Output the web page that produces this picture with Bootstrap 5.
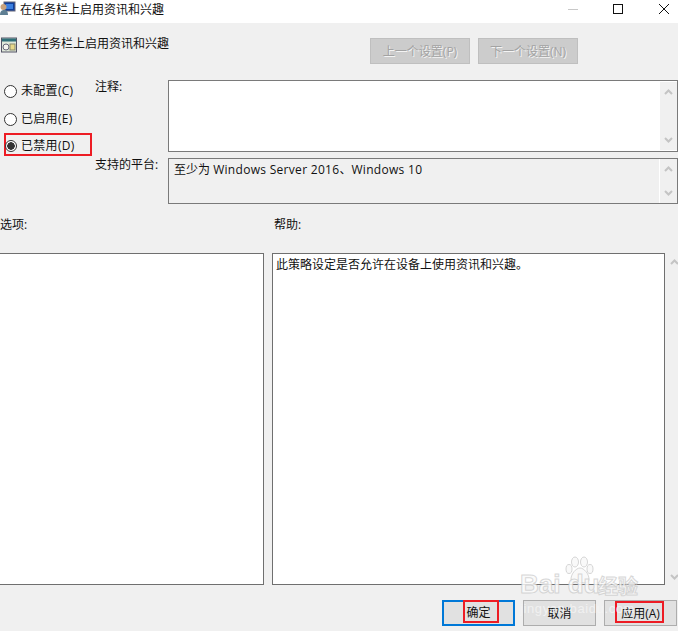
<!doctype html>
<html lang="zh">
<head>
<meta charset="utf-8">
<title>在任务栏上启用资讯和兴趣</title>
<link href="https://cdn.jsdelivr.net/npm/bootstrap@5.3.0/dist/css/bootstrap.min.css" rel="stylesheet">
<style>
html,body{height:100%;overflow:hidden}
body{background:#f0f0f0;color:#111;font:12px/16px "Open Sans","Noto Sans CJK SC",sans-serif;position:relative}
.tbar{height:23px;background:#fff;padding-bottom:3px}
.tbar-icon{flex:none;align-self:flex-start;margin-top:1px}
.tbar-title{margin-left:4px}
.winbtns{margin-left:auto;width:110px;height:23px;align-self:flex-start}
.head-row{height:41px;margin-top:12px;padding-left:1px}
.head-icon{flex:none;margin-top:2px}
.btn:disabled.nav-b{width:100px;height:26px;padding:1px 0 0;background:#ccc;border:1px solid #bfbfbf;border-radius:0;color:#a3a3a3;font-size:12px;text-shadow:1px 1px 0 #f4f4f4;opacity:1}
.nav-group{margin-left:auto;margin-right:100px;margin-top:3px;gap:8px;align-self:flex-start}
.head-title{margin-left:8px;margin-top:1px;height:16px}
.cfg{height:128px}
.radios{width:95px;padding-left:4px;padding-top:1px;letter-spacing:.3px}
.radio-item{height:28px;margin:0;padding:0;min-height:0;display:flex;align-items:center;gap:4px;width:88px}
.radio-item .form-check-input{float:none;margin:0;width:13px;height:13px;flex:none;border:1px solid #333;background-color:#fff;box-shadow:none}
.radio-item .form-check-input:checked{background-color:#fff;border-color:#333;background-image:radial-gradient(circle,#333 0 3.5px,transparent 4px)}
.radio-item.radio-on{height:23px;border:2px solid #ed1c24;margin-top:0;padding-top:3px;width:88px}
.radio-item.radio-on .form-check-input{width:12px;height:12px;margin-left:-1px}
.flabels{width:73px;padding-top:3px}
.lab1{height:78px}
.fields{width:510px;padding-top:4px}
.fbox{border:1px solid #7a7a7a;display:flex;justify-content:flex-end}
.fbox-a{height:72px;background:#fff}
.fbox-b{height:46px;background:#f0f0f0;margin-top:6px}
.fbox-text{flex:1;padding:3px 5px}
.lat{letter-spacing:.3px}
.sbar{width:17px;background:#f0f0f0;margin:1px 0;display:flex;flex-direction:column;justify-content:space-between;align-items:center;padding:7px 0}
.sbar-b{border-left:1px solid #fff;margin:0;width:18px}
.opts{height:49px;padding-top:13px}
.opt-l{width:274px}
.panes{height:332px;gap:8px}
.pane{background:#fff;border:1px solid #6f6f6f;flex:none}
.pane-l{width:265px;margin-left:-1px}
.pane-r{width:393px;padding:3px 3px}
.side-chev{width:18px;flex:none;margin-left:-8px;display:flex;flex-direction:column;justify-content:space-between;align-items:center;padding:6px 0 5px}
.foot{margin-top:15px;gap:8px;padding-left:442px}
.act{width:73px;height:26px;padding:1px 0 0;background:#e1e1e1;border:1px solid #adadad;border-radius:0;color:#111;font-size:12px;line-height:22px;position:relative;flex:none}
.act-def{border:2px solid #0078d7;padding:0}
.mark-red{position:absolute;border:2px solid #ed1c24}
.m-ok{left:19px;width:36px;top:-2px;height:23px}
.m-ap{left:10px;width:49px;top:0;height:22px}
.wm{position:absolute;left:520px;top:555px;width:130px;height:64px;pointer-events:none}
.wm-main{position:absolute;left:0;top:14px;font:700 26px/30px "Liberation Sans",sans-serif;color:rgba(250,250,250,.85);-webkit-text-stroke:1px rgba(190,190,190,.6);white-space:nowrap}
.wm-cn{position:absolute;left:78px;top:18px;font:700 20px/26px "Noto Sans CJK SC",sans-serif;color:rgba(250,250,250,.85);-webkit-text-stroke:1px rgba(190,190,190,.6);white-space:nowrap}
.wm-sub{position:absolute;left:0;top:46px;font:13px/16px "Liberation Sans",sans-serif;color:rgba(245,245,245,.8);letter-spacing:.6px;white-space:nowrap}
.wm-paw{position:absolute;left:45px;top:1px}
</style>
</head>
<body>
<div class="tbar d-flex align-items-center">
  <svg class="tbar-icon" width="16" height="16" viewBox="0 0 16 16"><rect x="4" y="1" width="11" height="9" fill="#0f3f9e" stroke="#667"/><rect x="6" y="3" width="7" height="5" fill="#3b7fe0"/><circle cx="3.5" cy="6" r="3" fill="#c9a27c"/><path d="M0 14c0-4 2-5 4-5s4 1 4 5z" fill="#5f7f93"/></svg>
  <span class="tbar-title">在任务栏上启用资讯和兴趣</span>
  <div class="winbtns">
    <svg width="110" height="23" viewBox="0 0 110 23"><path d="M0 9.5h10" stroke="#c8c8c8"/><rect x="45.5" y="4.5" width="9" height="9" fill="none" stroke="#111"/><path d="M91 4l10 10M101 4L91 14" stroke="#111" fill="none"/></svg>
  </div>
</div>
<div class="head-row d-flex">
  <svg class="head-icon" width="16" height="16" viewBox="0 0 16 16"><rect x=".5" y="1" width="15" height="14" fill="#dfe8da" stroke="#556"/><rect x="1" y="1.5" width="14" height="3" fill="#2f6f78"/><circle cx="5" cy="10" r="3" fill="#f6f6f0" stroke="#667"/><rect x="9" y="7" width="5" height="6" fill="#e8d98a" stroke="#8a8a6a"/></svg>
  <span class="head-title">在任务栏上启用资讯和兴趣</span>
  <div class="nav-group d-flex">
    <button class="btn nav-b" disabled>上一个设置(P)</button>
    <button class="btn nav-b" disabled>下一个设置(N)</button>
  </div>
</div>
<div class="cfg d-flex">
  <div class="radios">
    <label class="form-check radio-item"><input class="form-check-input" type="radio" name="cfg"><span>未配置(C)</span></label>
    <label class="form-check radio-item"><input class="form-check-input" type="radio" name="cfg"><span>已启用(E)</span></label>
    <label class="form-check radio-item radio-on"><input class="form-check-input" type="radio" name="cfg" checked><span>已禁用(D)</span></label>
  </div>
  <div class="flabels">
    <div class="lab1">注释:</div>
    <div>支持的平台:</div>
  </div>
  <div class="fields">
    <div class="fbox fbox-a">
      <div class="sbar"><svg width="9" height="6" viewBox="0 0 9 6"><path d="M1 5l3.5-3.5L8 5" fill="none" stroke="#c4c4c4" stroke-width="2"/></svg><svg width="9" height="6" viewBox="0 0 9 6"><path d="M1 1l3.5 3.5L8 1" fill="none" stroke="#c4c4c4" stroke-width="2"/></svg></div>
    </div>
    <div class="fbox fbox-b">
      <div class="fbox-text">至少为 <span class="lat">Windows Server 2016</span>、<span class="lat">Windows 10</span></div>
      <div class="sbar sbar-b"><svg width="9" height="6" viewBox="0 0 9 6"><path d="M1 5l3.5-3.5L8 5" fill="none" stroke="#c4c4c4" stroke-width="2"/></svg><svg width="9" height="6" viewBox="0 0 9 6"><path d="M1 1l3.5 3.5L8 1" fill="none" stroke="#c4c4c4" stroke-width="2"/></svg></div>
    </div>
  </div>
</div>
<div class="opts d-flex"><div class="opt-l">选项:</div><div>帮助:</div></div>
<div class="panes d-flex">
  <div class="pane pane-l"></div>
  <div class="pane pane-r">此策略设定是否允许在设备上使用资讯和兴趣。</div>
  <div class="side-chev"><svg width="9" height="6" viewBox="0 0 9 6"><path d="M1 5l3.5-3.5L8 5" fill="none" stroke="#c4c4c4" stroke-width="2"/></svg><svg width="9" height="6" viewBox="0 0 9 6"><path d="M1 1l3.5 3.5L8 1" fill="none" stroke="#c4c4c4" stroke-width="2"/></svg></div>
</div>
<div class="foot d-flex">
  <button class="btn act act-def">确定<span class="mark-red m-ok"></span></button>
  <button class="btn act">取消</button>
  <button class="btn act">应用(A)<span class="mark-red m-ap"></span></button>
</div>
<div class="wm">
  <svg class="wm-paw" width="30" height="30" viewBox="0 0 30 30" fill="#f8f8f8" fill-opacity=".85" stroke="#c4c4c4" stroke-opacity=".7"><ellipse cx="10" cy="6" rx="3.500" ry="5"/><ellipse cx="19" cy="6" rx="3.500" ry="5"/><ellipse cx="4" cy="13" rx="3" ry="4.500"/><ellipse cx="25" cy="13" rx="3" ry="4.500"/><path d="M15 12c4 0 9 6 9 11 0 5-5 4-9 3.500-4 .5-9 1.500-9-3.500 0-5 5-11 9-11z"/></svg>
  <div class="wm-main">Bai du</div>
  <div class="wm-cn">经验</div>
  <div class="wm-sub">jingyan.baidu.com</div>
</div>
<script src="https://cdn.jsdelivr.net/npm/bootstrap@5.3.0/dist/js/bootstrap.bundle.min.js"></script>
</body>
</html>
